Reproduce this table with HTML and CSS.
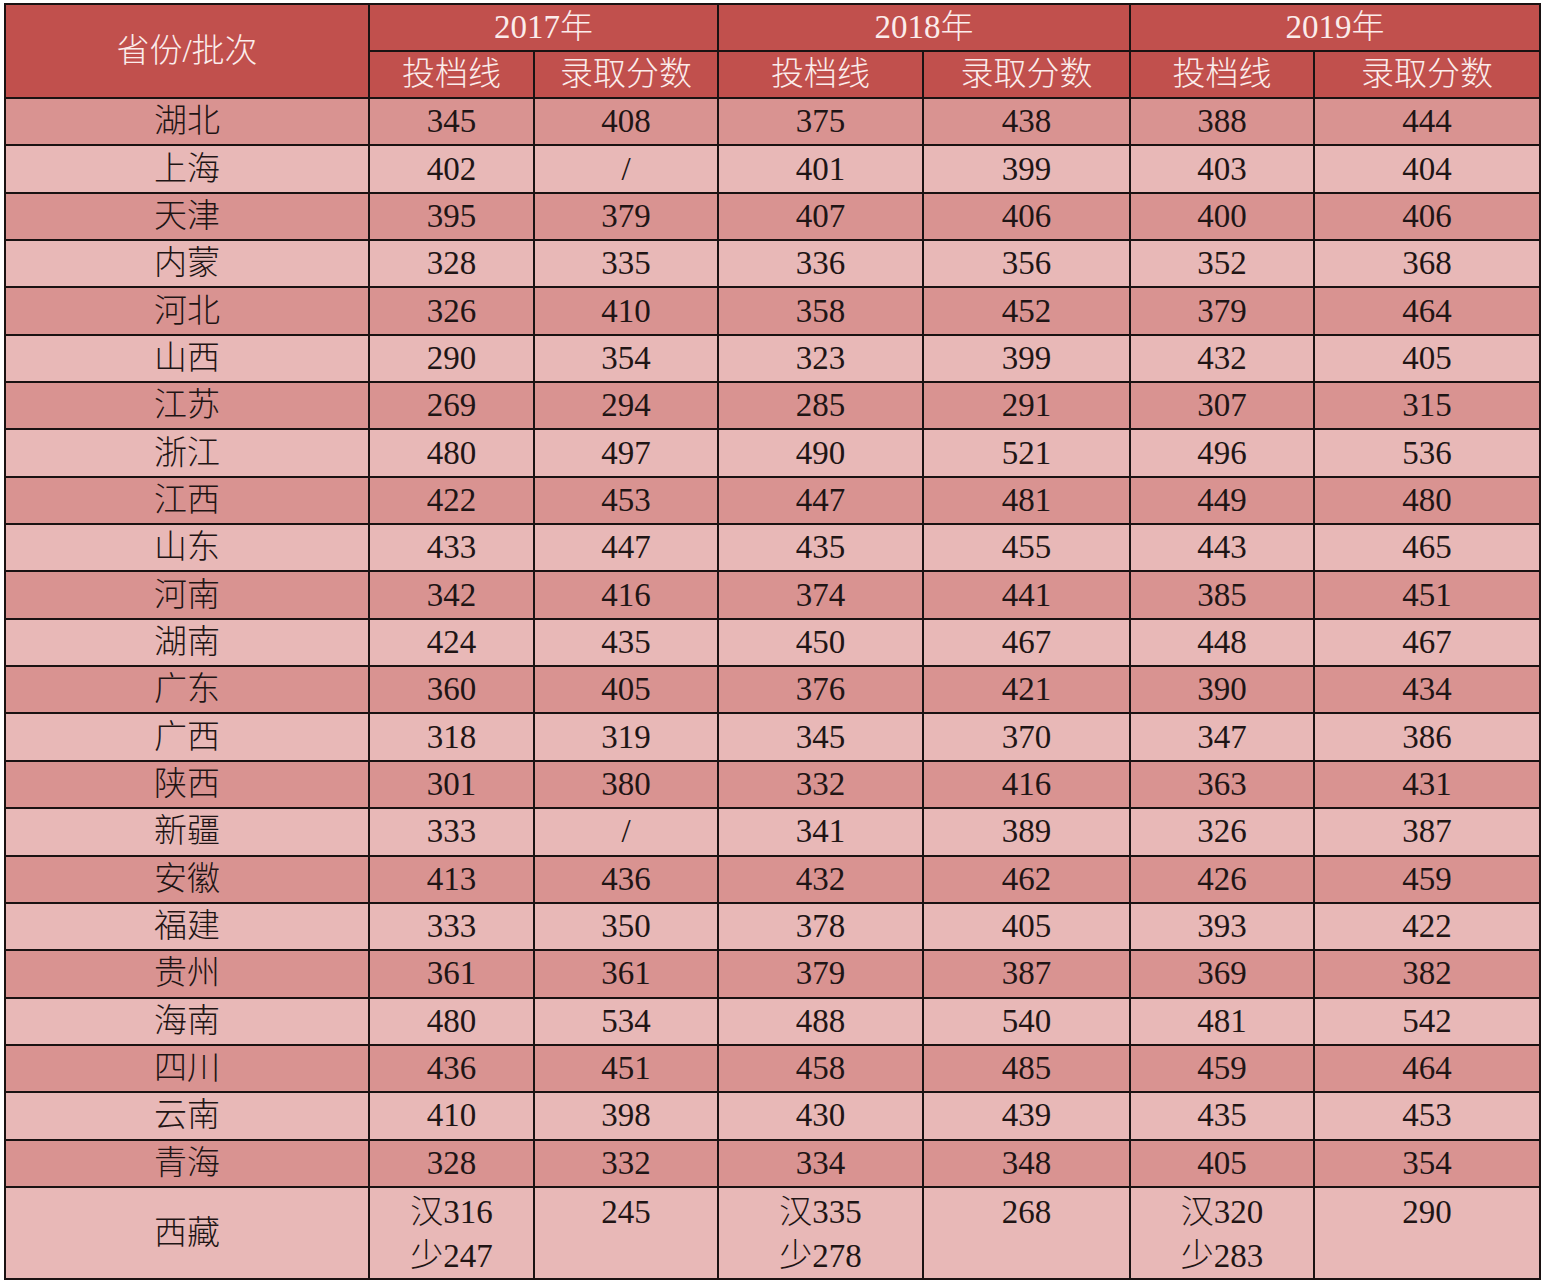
FILE: index.html
```html
<!DOCTYPE html>
<html lang="zh">
<head>
<meta charset="utf-8">
<title>录取分数</title>
<link rel="stylesheet" href="styles.css">
</head>
<body>
<table class="scores">
<colgroup>
<col class="c-prov"><col class="c-a"><col class="c-b"><col class="c-c"><col class="c-d"><col class="c-e"><col class="c-f">
</colgroup>
<thead>
<tr class="h1"><th rowspan="2">省份/批次</th><th colspan="2">2017年</th><th colspan="2">2018年</th><th colspan="2">2019年</th></tr>
<tr class="h2"><th>投档线</th><th>录取分数</th><th>投档线</th><th>录取分数</th><th>投档线</th><th>录取分数</th></tr>
</thead>
<tbody>
<tr class="dark"><td>湖北</td><td>345</td><td>408</td><td>375</td><td>438</td><td>388</td><td>444</td></tr>
<tr class="light"><td>上海</td><td>402</td><td>/</td><td>401</td><td>399</td><td>403</td><td>404</td></tr>
<tr class="dark"><td>天津</td><td>395</td><td>379</td><td>407</td><td>406</td><td>400</td><td>406</td></tr>
<tr class="light"><td>内蒙</td><td>328</td><td>335</td><td>336</td><td>356</td><td>352</td><td>368</td></tr>
<tr class="dark"><td>河北</td><td>326</td><td>410</td><td>358</td><td>452</td><td>379</td><td>464</td></tr>
<tr class="light"><td>山西</td><td>290</td><td>354</td><td>323</td><td>399</td><td>432</td><td>405</td></tr>
<tr class="dark"><td>江苏</td><td>269</td><td>294</td><td>285</td><td>291</td><td>307</td><td>315</td></tr>
<tr class="light"><td>浙江</td><td>480</td><td>497</td><td>490</td><td>521</td><td>496</td><td>536</td></tr>
<tr class="dark"><td>江西</td><td>422</td><td>453</td><td>447</td><td>481</td><td>449</td><td>480</td></tr>
<tr class="light"><td>山东</td><td>433</td><td>447</td><td>435</td><td>455</td><td>443</td><td>465</td></tr>
<tr class="dark"><td>河南</td><td>342</td><td>416</td><td>374</td><td>441</td><td>385</td><td>451</td></tr>
<tr class="light"><td>湖南</td><td>424</td><td>435</td><td>450</td><td>467</td><td>448</td><td>467</td></tr>
<tr class="dark"><td>广东</td><td>360</td><td>405</td><td>376</td><td>421</td><td>390</td><td>434</td></tr>
<tr class="light"><td>广西</td><td>318</td><td>319</td><td>345</td><td>370</td><td>347</td><td>386</td></tr>
<tr class="dark"><td>陕西</td><td>301</td><td>380</td><td>332</td><td>416</td><td>363</td><td>431</td></tr>
<tr class="light"><td>新疆</td><td>333</td><td>/</td><td>341</td><td>389</td><td>326</td><td>387</td></tr>
<tr class="dark"><td>安徽</td><td>413</td><td>436</td><td>432</td><td>462</td><td>426</td><td>459</td></tr>
<tr class="light"><td>福建</td><td>333</td><td>350</td><td>378</td><td>405</td><td>393</td><td>422</td></tr>
<tr class="dark"><td>贵州</td><td>361</td><td>361</td><td>379</td><td>387</td><td>369</td><td>382</td></tr>
<tr class="light"><td>海南</td><td>480</td><td>534</td><td>488</td><td>540</td><td>481</td><td>542</td></tr>
<tr class="dark"><td>四川</td><td>436</td><td>451</td><td>458</td><td>485</td><td>459</td><td>464</td></tr>
<tr class="light"><td>云南</td><td>410</td><td>398</td><td>430</td><td>439</td><td>435</td><td>453</td></tr>
<tr class="dark"><td>青海</td><td>328</td><td>332</td><td>334</td><td>348</td><td>405</td><td>354</td></tr>
<tr class="light last"><td class="mid">西藏</td><td>汉316<br>少247</td><td>245</td><td>汉335<br>少278</td><td>268</td><td>汉320<br>少283</td><td>290</td></tr>
</tbody>
</table>
</body>
</html>
```

FILE: styles.css
```css
html, body {
  margin: 0;
  padding: 0;
  background: #ffffff;
}

.scores {
  margin: 3px 0 0 4px;
  width: 1537px;
  border-collapse: collapse;
  table-layout: fixed;
  font-family: "Liberation Serif", "Noto Sans CJK SC", serif;
  font-size: 33px;
  font-weight: 300;
  color: #1f1515;
}

.c-prov { width: 364px; }
.c-a { width: 165px; }
.c-b { width: 184px; }
.c-c { width: 205px; }
.c-d { width: 207px; }
.c-e { width: 184px; }
.c-f { width: 226px; }

.scores th,
.scores td {
  border: 2px solid #1a1212;
  padding: 0;
  text-align: center;
  vertical-align: middle;
  line-height: 1;
}

.scores th {
  background: #c1504d;
  color: #fbeceb;
  font-weight: 300;
}

.h1, .h2 { height: 47px; }

.scores tbody tr { height: 47.35px; }

.dark td { background: #d99391; }
.light td { background: #e8b8b7; }

.scores tr.last { height: 89px; }

.last td {
  vertical-align: top;
  line-height: 44px;
  padding-top: 2px;
}

.last td.mid {
  vertical-align: middle;
  padding-top: 0;
}
```
